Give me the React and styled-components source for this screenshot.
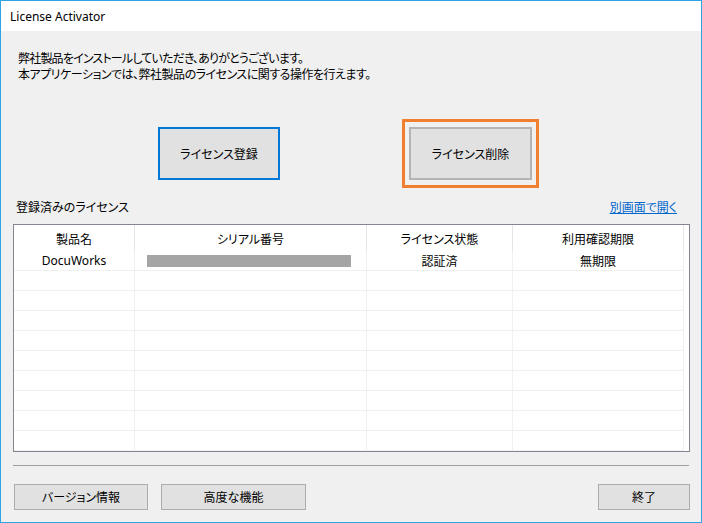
import styled, { createGlobalStyle } from "styled-components";

const GlobalStyle = createGlobalStyle`
  html, body {
    margin: 0;
    padding: 0;
    background: #ffffff;
  }
  * {
    box-sizing: border-box;
  }
`;

const Window = styled.div`
  width: 702px;
  height: 523px;
  border: 1px solid #2ea4e6;
  display: flex;
  flex-direction: column;
  font-family: "Noto Sans", "Noto Sans CJK JP", sans-serif;
  font-size: 12px;
  color: #000;
  font-feature-settings: "palt";
`;

const TitleBar = styled.div`
  height: 30px;
  flex-shrink: 0;
  background: #ffffff;
  display: flex;
  align-items: center;
  padding-left: 9px;
  font-size: 12px;
  color: #000;
`;

const Body = styled.div`
  flex: 1;
  background: #f0f0f0;
  padding: 0 11px 0 12px;
  display: flex;
  flex-direction: column;
`;

const Intro = styled.div`
  margin-top: 20px;
  padding-left: 5px;
`;

const IntroLine = styled.div`
  line-height: 16px;
  white-space: nowrap;
  letter-spacing: ${(p) => p.$tracking || 0}px;
`;

const ActionRow = styled.div`
  margin-top: 36px;
  display: flex;
  align-items: center;
  padding-left: 145px;
  gap: 122px;
`;

const Button = styled.button`
  font-family: inherit;
  font-size: 12px;
  font-feature-settings: "palt";
  color: #000;
  background: #e1e1e1;
  border: ${(p) => (p.$focused ? "2px solid #0078d7" : p.$thick ? "2px solid #b4b4b4" : "1px solid #adadad")};
  width: ${(p) => p.$w}px;
  height: ${(p) => p.$h || 26}px;
  padding: 0;
  margin: 0;
`;

const Highlight = styled.div`
  border: 3px solid #f08030;
  padding: 5px 4px;
  display: flex;
`;

const SectionHead = styled.div`
  margin-top: 12px;
  display: flex;
  justify-content: space-between;
  align-items: center;
  line-height: 16px;
  padding: 0 13px 0 3px;
`;

const Link = styled.a`
  color: #0066cc;
  text-decoration: underline;
  cursor: pointer;
`;

const List = styled.div`
  margin-top: 8px;
  height: 228px;
  background: #ffffff;
  border: 1px solid #828790;
  overflow: hidden;
`;

const HeaderRow = styled.div`
  display: flex;
  height: 26px;
`;

const HeaderCell = styled.div`
  width: ${(p) => p.$w}px;
  flex-shrink: 0;
  border-right: 1px solid #e5e5e5;
  display: flex;
  align-items: center;
  justify-content: center;
  padding-top: 2px;
`;

const Row = styled.div`
  display: flex;
  height: 20px;
  border-bottom: 1px solid #f0f0f0;
  width: 670px;
`;

const Cell = styled.div`
  width: ${(p) => p.$w}px;
  flex-shrink: 0;
  border-right: 1px solid #f0f0f0;
  display: flex;
  align-items: center;
  justify-content: ${(p) => (p.$left ? "flex-start" : "center")};
  padding-left: ${(p) => (p.$left ? 12 : 0)}px;
`;

const SerialMask = styled.div`
  width: 204px;
  height: 12px;
  background: #a5a5a5;
`;

const Divider = styled.div`
  margin-top: 13px;
  height: 1px;
  background: #a0a0a0;
  margin-right: 1px;
`;

const Footer = styled.div`
  margin-top: 18px;
  display: flex;
  align-items: center;
  padding-left: 1px;
  gap: 13px;
`;

const Spacer = styled.div`
  flex: 1;
`;

const columns = [121, 232, 146, 171];

const records = [
  { name: "DocuWorks", status: "認証済", expiry: "無期限" },
];

function App() {
  const emptyRows = 9;
  return (
    <>
      <GlobalStyle />
      <Window>
        <TitleBar>License Activator</TitleBar>
        <Body>
          <Intro>
            <IntroLine $tracking={-0.8}>
              弊社製品をインストールしていただき、ありがとうございます。
            </IntroLine>
            <IntroLine $tracking={-0.5}>
              本アプリケーションでは、弊社製品のライセンスに関する操作を行えます。
            </IntroLine>
          </Intro>
          <ActionRow>
            <Button $focused $w={122} $h={53}>
              ライセンス登録
            </Button>
            <Highlight>
              <Button $thick $w={123} $h={53}>
                ライセンス削除
              </Button>
            </Highlight>
          </ActionRow>
          <SectionHead>
            <span>登録済みのライセンス</span>
            <Link>別画面で開く</Link>
          </SectionHead>
          <List>
            <HeaderRow>
              <HeaderCell $w={columns[0]}>製品名</HeaderCell>
              <HeaderCell $w={columns[1]}>シリアル番号</HeaderCell>
              <HeaderCell $w={columns[2]}>ライセンス状態</HeaderCell>
              <HeaderCell $w={columns[3]}>利用確認期限</HeaderCell>
            </HeaderRow>
            {records.map((r) => (
              <Row key={r.name}>
                <Cell $w={columns[0]}>{r.name}</Cell>
                <Cell $w={columns[1]} $left>
                  <SerialMask />
                </Cell>
                <Cell $w={columns[2]}>{r.status}</Cell>
                <Cell $w={columns[3]}>{r.expiry}</Cell>
              </Row>
            ))}
            {Array.from({ length: emptyRows }).map((_, i) => (
              <Row key={i}>
                {columns.map((w, j) => (
                  <Cell key={j} $w={w} />
                ))}
              </Row>
            ))}
          </List>
          <Divider />
          <Footer>
            <Button $w={134}>バージョン情報</Button>
            <Button $w={145}>高度な機能</Button>
            <Spacer />
            <Button $w={92}>終了</Button>
          </Footer>
        </Body>
      </Window>
    </>
  );
}

export default App;
